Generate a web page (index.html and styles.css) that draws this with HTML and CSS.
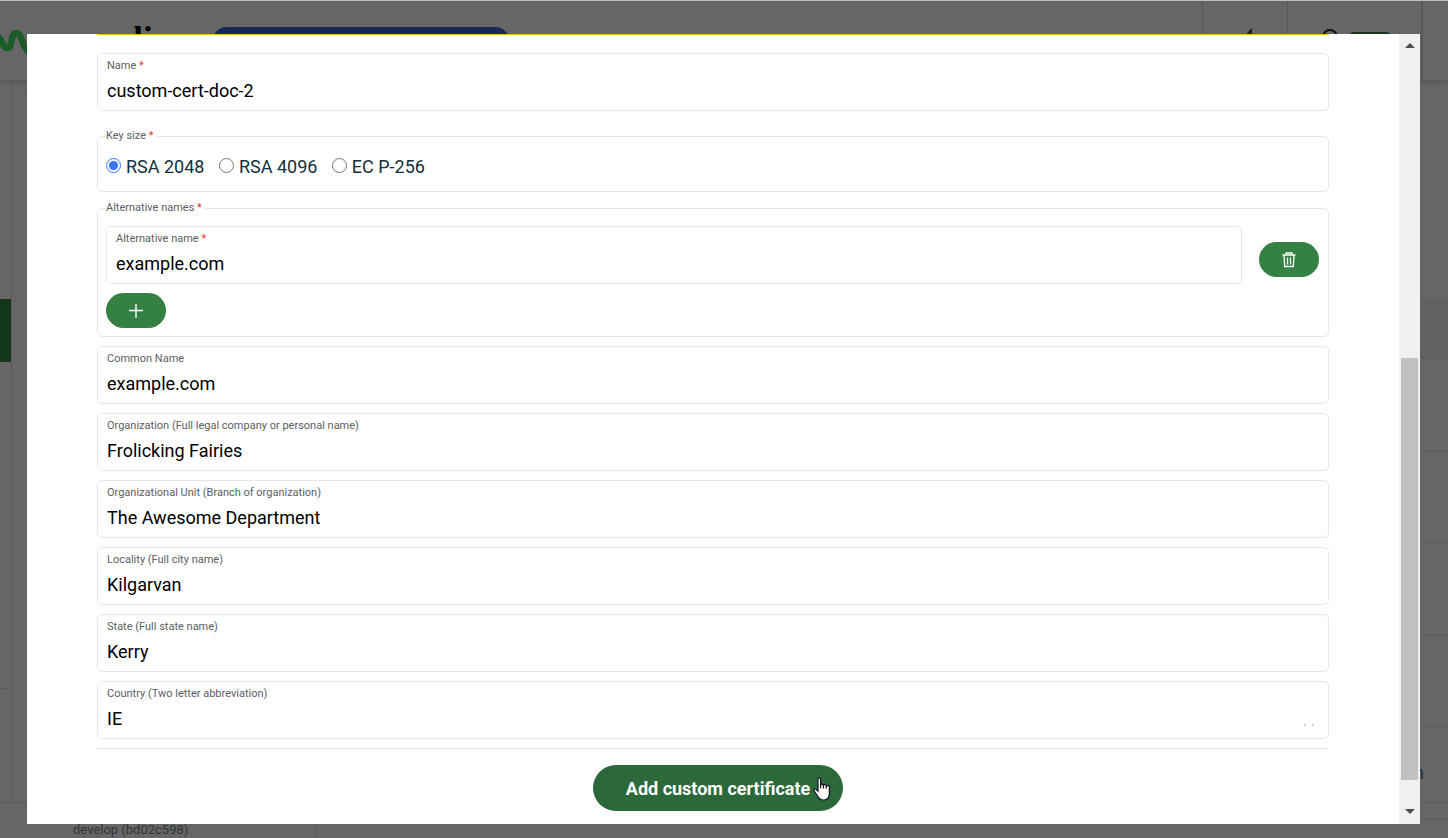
FILE: index.html
```html
<!DOCTYPE html>
<html lang="en">
<head>
    <meta charset="UTF-8">
    <title>Certificates</title>
    <link rel="stylesheet" href="styles.css">
</head>
<body>

<div class="page">
    <header class="header">
        <svg class="logo" width="28" height="36" viewBox="0 0 28 36">
            <path d="M-3 18 C2 20 2 30 7.500 30 C13 30 10 15 16.500 15 C22 15 21 27 29 34" fill="none" stroke="#1b5b27" stroke-width="6.500"/>
        </svg>
        <span class="brand">mosaulic</span>
        <span class="banner"></span>
        <div class="tool">
            <svg width="24" height="24" viewBox="0 0 24 24">
                <path d="M6 10 L12 3 V12" fill="none" stroke="#111" stroke-width="1.500"/>
            </svg>
        </div>
        <div class="tool user">
            <svg width="20" height="20" viewBox="0 0 20 20">
                <circle cx="10" cy="10" r="7" fill="none" stroke="#111" stroke-width="2"/>
            </svg>
            <span class="tag"></span>
        </div>
        <div class="tool-end"></div>
    </header>
    <div class="main">
        <nav class="side"><div class="side-active"></div><div class="side-end"></div></nav>
        <div class="content"></div>
        <div class="rows">
            <div class="row row-head"></div>
            <div class="row"></div>
            <div class="row"></div>
            <div class="row"></div>
            <div class="row"></div>
            <div class="row">n</div>
        </div>
    </div>
    <footer class="footer"><span class="version">develop (bd02c598)</span></footer>
</div>

<div class="modal">
    <form class="form">
        <div class="field">
            <label for="name">Name <b>*</b></label>
            <input id="name" type="text" value="custom-cert-doc-2">
        </div>

        <fieldset class="group keys">
            <legend>Key size <b>*</b></legend>
            <label class="radio"><input type="radio" name="key" checked>RSA 2048</label>
            <label class="radio"><input type="radio" name="key">RSA 4096</label>
            <label class="radio"><input type="radio" name="key">EC P-256</label>
        </fieldset>

        <fieldset class="group alt">
            <legend>Alternative names <b>*</b></legend>
            <div class="alt-row">
                <div class="field">
                    <label for="alt">Alternative name <b>*</b></label>
                    <input id="alt" type="text" value="example.com">
                </div>
                <button class="btn" type="button" aria-label="Delete">
                    <svg width="14" height="16" viewBox="0 0 14 16" fill="none" stroke="#fff">
                        <path d="M0.500 3 H13.500 M4 2.500 V1 H10 V2.500 M2 3.500 L2.700 14.500 H11.300 L12 3.500 M5.500 5.500 V12.500 M8.500 5.500 V12.500" stroke-width="1.300"/>
                    </svg>
                </button>
            </div>
            <button class="btn" type="button" aria-label="Add">
                <svg width="14" height="14" viewBox="0 0 14 14" fill="none" stroke="#fff">
                    <path d="M0 6.500 H14 M7 0 V14" stroke-width="1.400"/>
                </svg>
            </button>
        </fieldset>

        <div class="field">
            <label for="cn">Common Name</label>
            <input id="cn" type="text" value="example.com">
        </div>
        <div class="field">
            <label for="org">Organization (Full legal company or personal name)</label>
            <input id="org" type="text" value="Frolicking Fairies">
        </div>
        <div class="field">
            <label for="unit">Organizational Unit (Branch of organization)</label>
            <input id="unit" type="text" value="The Awesome Department">
        </div>
        <div class="field">
            <label for="city">Locality (Full city name)</label>
            <input id="city" type="text" value="Kilgarvan">
        </div>
        <div class="field">
            <label for="state">State (Full state name)</label>
            <input id="state" type="text" value="Kerry">
        </div>
        <div class="field country">
            <label for="country">Country (Two letter abbreviation)</label>
            <input id="country" type="text" value="IE">
            <svg class="dots" width="12" height="2" viewBox="0 0 12 2">
                <path d="M1 1 H3 M9 1 H11" stroke="#aaa"/>
            </svg>
        </div>

        <div class="actions">
            <button class="submit" type="submit">Add custom certificate</button>
        </div>
    </form>
    <div class="scrollbar">
        <div class="arrow up"></div>
        <div class="thumb"></div>
        <div class="arrow down"></div>
    </div>
</div>

<!-- hand pointer -->
<svg class="pointer" width="18" height="24" viewBox="0 0 18 24">
    <path d="M5 1.8 C5 0.5 7.6 0.5 7.6 1.8 V8 C8 6.8 10.4 7 10.4 8.3 C11 7.3 13.2 7.6 13.3 9 C14 8.2 16.4 8.6 16.4 10.2 V16 C16.4 20.5 14 23 10.5 23 C7.4 23 6 21.6 4.6 19 L1.2 14 C0.4 12.5 2 11.4 3.2 12.4 L5 14.2 Z" fill="#fff" stroke="#112" stroke-width="1.2"/>
    <path d="M7.6 8 V11.5 M10.4 8.4 V11.5 M13.3 9 V11.8" stroke="#112" stroke-width="1.1"/>
</svg>

</body>
</html>
```

FILE: styles.css
```css
* {
    box-sizing: border-box;
}

body {
    margin: 0;
    font-family: Roboto, sans-serif;
    font-size: 18px;
    background: #666;
}

/* page behind the dialog */
.page {
    height: 100vh;
    display: flex;
    flex-direction: column;
    overflow: hidden;
}

.header {
    height: 80px;
    flex: none;
    display: flex;
    border-top: 1px solid #b9bfbc;
    box-shadow: 0 2px 6px #555;
}

.logo {
    margin-top: 17px;
}

.brand {
    width: 184px;
    padding: 21px 0 0 8px;
    font: bold 35px/36px "Liberation Serif", serif;
}

.banner {
    width: 298px;
    height: 30px;
    margin-top: 26px;
    border-radius: 15px;
    background: #1a2759;
}

.tool {
    width: 85px;
    padding: 26px 0 0 36px;
    border-left: 1px solid #575757;
}

.banner + .tool {
    margin-left: auto;
}

.user {
    width: 134px;
    padding-left: 32px;
    display: flex;
    gap: 8px;
}

.tag {
    width: 44px;
    height: 20px;
    margin-top: 5px;
    border-radius: 6px;
    background: #14371b;
}

.tool-end {
    width: 27px;
    border-left: 2px solid #575757;
}

.main {
    flex: 1;
    min-height: 0;
    display: flex;
    border-bottom: 1px solid #5a5a5a;
}

.side {
    width: 12px;
    padding-top: 219px;
    border-right: 1px solid #5a5a5a;
}

.side-active {
    height: 63px;
    background: #14371b;
}

.side-end {
    height: 327px;
    border-bottom: 1px solid #5a5a5a;
}

.content {
    flex: 1;
}

.rows {
    width: 27px;
    padding-top: 220px;
}

.row {
    display: flex;
    align-items: center;
    justify-content: flex-end;
    height: 92px;
    padding-right: 24px;
    border-bottom: 1px solid #5c5c5c;
    color: #12303c;
}

.row-head {
    height: 59px;
    border-top: 1px solid #5c5c5c;
    background: #626262;
}

.footer {
    height: 35px;
    flex: none;
    display: flex;
}

.version {
    width: 316px;
    padding: 19px 0 0 73px;
    font-size: 13px;
    line-height: 16px;
    color: #303838;
    border-right: 1px solid #5a5a5a;
}

/* dialog */
.modal {
    position: fixed;
    top: 34px;
    right: 28px;
    bottom: 14px;
    left: 27px;
    display: flex;
    background: #fff;
}

.form {
    flex: 1;
    padding: 0 70px;
}

.form::before {
    content: "";
    display: block;
    height: 1px;
    margin-bottom: 18px;
    background: #fdb913;
}

.field {
    height: 58px;
    margin-bottom: 9px;
    padding: 5px 9px 0;
    border: 1px solid #e8e8e8;
    border-radius: 5px;
}

.field label,
legend {
    display: block;
    font-size: 11px;
    line-height: 14px;
    color: #5c6062;
}

b {
    font-weight: normal;
    color: #e0402a;
}

.field input {
    display: block;
    width: 100%;
    height: 24px;
    margin-top: 6px;
    padding: 0;
    border: 0;
    outline: 0;
    font: 18px/24px Roboto, sans-serif;
    color: #000;
    background: none;
}

.country {
    position: relative;
}

.dots {
    position: absolute;
    right: 13px;
    bottom: 12px;
}

.group {
    margin: 0 0 9px;
    padding: 0 9px 0 8px;
    border: 1px solid #e8e8e8;
    border-radius: 5px;
}

legend {
    padding: 0 2px 0 0;
}

.keys {
    height: 63px;
    margin-top: 18px;
    padding-top: 12px;
    color: #12303c;
}

.radio {
    display: inline-flex;
    align-items: center;
    margin-right: 10px;
    line-height: 24px;
}

.radio input {
    width: 15px;
    height: 15px;
    margin: 0 5px 4px 0;
    accent-color: #3577ff;
}

.alt {
    padding-top: 11px;
    padding-bottom: 8px;
}

.alt-row {
    display: flex;
    gap: 17px;
    align-items: flex-start;
}

.alt-row .field {
    flex: 1;
}

.btn {
    display: flex;
    align-items: center;
    justify-content: center;
    width: 60px;
    height: 35px;
    padding: 0;
    border: 0;
    border-radius: 18px;
    background: #358143;
}

.alt-row .btn {
    margin-top: 16px;
}

.actions {
    display: flex;
    justify-content: center;
    padding: 16px 0 0 10px;
    border-top: 1px solid #e8e8e8;
}

.submit {
    height: 46px;
    padding: 0 33px;
    border: 0;
    border-radius: 23px;
    font: bold 18px Roboto, sans-serif;
    color: #fff;
    background: #2b693a;
}

.scrollbar {
    width: 21px;
    display: flex;
    flex-direction: column;
    align-items: center;
    padding: 9px 2px 10px;
    background: #f0f0f0;
}

.thumb {
    width: 17px;
    height: 422px;
    margin-top: auto;
    margin-bottom: 29px;
    background: #c1c1c1;
}

.arrow {
    border: 5px solid transparent;
}

.up {
    border-top: 0;
    border-bottom-color: #505050;
}

.down {
    border-bottom: 0;
    border-top-color: #505050;
}

.pointer {
    position: fixed;
    top: 777px;
    left: 813px;
}
```
